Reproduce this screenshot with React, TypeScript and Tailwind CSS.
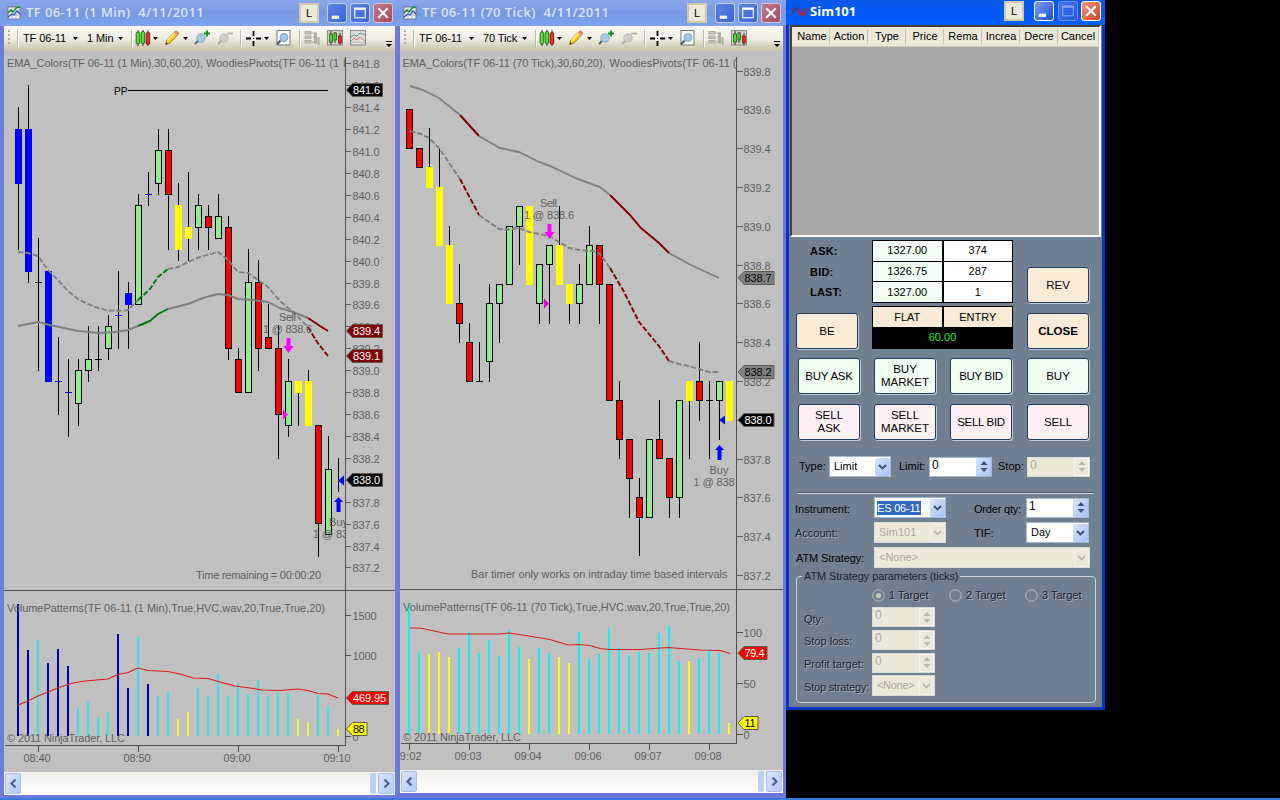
import React from "react";

type Kind = "b" | "g" | "r" | "y" | "k" | "db" | "dy";
/* [kind, body top, body bottom, wick top, wick bottom] */
type Candle = [Kind, number, number, number, number];
type Pt = [number, number];
type Seg = { c: string; p: Pt[]; dash?: boolean };
type Mark = { y: number; t: string; w: number; fill: string; color: string };
type Bar = [string, number];

const GRAY = "#808080";
const TXT = "#606060";
const FONT = '"Liberation Sans", Arial, sans-serif';

function T({ x, y, w, children, fill = TXT, size = 11 }: { x: number; y: number; w: number; children: string; fill?: string; size?: number }) {
  return (
    <text x={x} y={y} textLength={w} lengthAdjust="spacing" fontSize={size} fill={fill} fontFamily={FONT} xmlSpace="preserve">
      {children}
    </text>
  );
}

const FILLS: Record<string, string> = { b: "#0000ff", g: "#90ee90", r: "#ff0000", y: "#ffff00" };

function Candles({ x0, data }: { x0: number; data: Candle[] }) {
  return (
    <g shapeRendering="crispEdges">
      {data.map(([k, t, b, wt, wb], i) => {
        const x = x0 + i * 10;
        const doji = k === "k" || k === "db" || k === "dy";
        const line = k === "db" ? "#0000d0" : k === "dy" ? "#e8d800" : "#000";
        return (
          <g key={i}>
            {wb > wt && <rect x={x} y={wt} width={1} height={wb - wt} fill="#000" />}
            {doji && <rect x={x - 3} y={t} width={7} height={1} fill={line} />}
            {(k === "b" || k === "y") && <rect x={x - 3} y={t} width={7} height={b - t} fill={FILLS[k]} />}
            {(k === "g" || k === "r") && (
              <rect x={x - 2.5} y={t + 0.5} width={6} height={b - t - 1} fill={FILLS[k]} stroke="#000" strokeWidth={1} />
            )}
          </g>
        );
      })}
    </g>
  );
}

function Lines({ segs }: { segs: Seg[] }) {
  return (
    <g fill="none" strokeWidth={1.9}>
      {segs.map((s, i) => (
        <polyline key={i} stroke={s.c} strokeDasharray={s.dash ? "5.5 2" : undefined} points={s.p.map((q) => q.join(",")).join(" ")} />
      ))}
    </g>
  );
}

function Marker({ x, m }: { x: number; m: Mark }) {
  const r = x + m.w;
  return (
    <g>
      <path d={`M${x} ${m.y}L${x + 6} ${m.y - 6.5}H${r}V${m.y + 6.5}H${x + 6}Z`} fill={m.fill} stroke="#605c50" strokeWidth={1} />
      <T x={x + 6.5} y={m.y + 4} w={m.w - 9} fill={m.color}>{m.t}</T>
    </g>
  );
}

const DownArrow = ({ x, y }: { x: number; y: number }) => (
  <path d={`M${x - 2} ${y}h4v8h3l-5 7l-5 -7h3z`} fill="#ff00ff" />
);
const UpArrow = ({ x, y }: { x: number; y: number }) => (
  <path d={`M${x} ${y}l4.5 5h-2.5v10h-4v-10h-2.5z`} fill="#0000ff" />
);

const C1: Candle[] = [
  ["b", 129, 184, 107, 250], ["b", 129, 272, 85, 283], ["k", 282, 283, 238, 371], ["b", 271, 382, 0, 0],
  ["db", 381, 382, 337, 415], ["db", 392, 393, 359, 437], ["g", 370, 404, 359, 426], ["g", 359, 371, 326, 382],
  ["k", 359, 360, 326, 371], ["g", 326, 349, 315, 360], ["db", 315, 316, 271, 349], ["b", 293, 305, 282, 349],
  ["g", 205, 305, 194, 205], ["db", 194, 195, 172, 206], ["g", 150, 184, 129, 195], ["r", 150, 195, 129, 250],
  ["y", 205, 250, 183, 261], ["y", 227, 239, 172, 261], ["g", 205, 228, 194, 250], ["r", 216, 228, 205, 250],
  ["g", 216, 239, 194, 216], ["r", 227, 349, 216, 360], ["r", 359, 393, 348, 359], ["g", 282, 393, 249, 282],
  ["r", 282, 349, 260, 371], ["r", 337, 349, 304, 337], ["r", 348, 415, 326, 459], ["g", 381, 426, 359, 437],
  ["y", 381, 393, 393, 426], ["y", 381, 426, 370, 381], ["r", 425, 524, 524, 557], ["g", 469, 535, 436, 469],
  ["dy", 480, 481, 458, 492],
];

const C2: Candle[] = [
  ["r", 109, 149, 0, 0], ["r", 148, 168, 0, 0], ["y", 167, 188, 128, 167], ["y", 187, 246, 149, 187],
  ["y", 245, 304, 226, 245], ["r", 303, 324, 264, 343], ["r", 342, 382, 323, 342], ["k", 381, 382, 342, 382],
  ["g", 303, 362, 284, 382], ["g", 284, 304, 304, 343], ["g", 226, 285, 0, 0], ["g", 206, 227, 227, 265],
  ["y", 206, 285, 0, 0], ["g", 264, 304, 304, 324], ["g", 245, 265, 265, 324], ["y", 245, 285, 206, 245],
  ["y", 284, 304, 304, 324], ["g", 284, 304, 264, 324], ["g", 245, 285, 226, 245], ["r", 245, 285, 285, 324],
  ["r", 284, 401, 0, 0], ["r", 400, 440, 381, 459], ["r", 439, 479, 479, 518], ["r", 497, 518, 478, 556],
  ["g", 439, 518, 0, 0], ["r", 439, 459, 400, 439], ["r", 458, 498, 498, 518], ["g", 400, 498, 498, 518],
  ["y", 381, 401, 401, 459], ["r", 381, 401, 342, 421], ["k", 400, 401, 381, 459], ["g", 381, 401, 401, 440],
  ["y", 381, 421, 0, 0],
];

const S1: Seg[] = [
  { c: GRAY, dash: true, p: [[18, 252], [28, 253], [38, 256], [48, 270], [58, 280], [68, 291], [78, 299], [88, 304], [98, 308], [108, 310.5], [118, 311], [128, 310], [138, 300]] },
  { c: "#007800", dash: true, p: [[138, 300], [150, 289], [158, 277], [168, 269]] },
  { c: GRAY, dash: true, p: [[168, 269], [178, 267], [188, 262], [200, 257], [218, 252], [228, 260], [238, 272], [248, 273], [258, 280], [268, 287], [280, 301], [293, 312], [308, 327]] },
  { c: "#800000", dash: true, p: [[308, 327], [317, 342], [328, 356]] },
  { c: GRAY, p: [[18, 326], [38, 322], [50, 325], [78, 331], [100, 333], [115, 332], [128, 330], [138, 326]] },
  { c: "#007800", p: [[138, 326], [150, 321], [158, 314], [168, 309]] },
  { c: GRAY, p: [[168, 309], [188, 304], [203, 298], [218, 294], [228, 295], [238, 299], [253, 300], [268, 302], [280, 308], [293, 312], [308, 318]] },
  { c: "#800000", p: [[308, 318], [320, 326], [328, 331]] },
];

const S2: Seg[] = [
  { c: GRAY, p: [[410, 86], [420, 89], [429, 93], [439, 98], [460, 115]] },
  { c: "#800000", p: [[460, 115], [479, 136]] },
  { c: GRAY, p: [[479, 136], [500, 148], [519, 152], [539, 162], [550, 166], [569, 175], [578, 179], [600, 187], [610, 195]] },
  { c: "#800000", p: [[610, 195], [629, 214], [641, 228], [659, 243], [669, 253]] },
  { c: GRAY, p: [[669, 253], [691, 265], [719, 278]] },
  { c: GRAY, dash: true, p: [[410, 131], [421, 134], [429, 138], [439, 148], [460, 179]] },
  { c: "#800000", dash: true, p: [[460, 179], [479, 215]] },
  { c: GRAY, dash: true, p: [[479, 215], [499, 229], [509, 229.5], [519, 228], [529, 232], [549, 236], [569, 248], [579, 250], [593, 251], [600, 254], [610, 268]] },
  { c: "#800000", dash: true, p: [[610, 268], [623, 290], [639, 322], [659, 346], [669, 361]] },
  { c: GRAY, dash: true, p: [[669, 361], [679, 364], [689, 366], [699, 369], [709, 372], [719, 372]] },
];

const V1: Bar[] = [
  ["n", 604], ["n", 650], ["c", 640], ["n", 663], ["n", 649], ["n", 666], ["c", 708], ["c", 701], ["c", 717], ["c", 712], ["n", 634],
  ["n", 688], ["c", 637], ["n", 684], ["c", 696], ["c", 691], ["y", 719], ["y", 712], ["c", 687], ["c", 696], ["c", 674], ["c", 696],
  ["c", 683], ["c", 694], ["c", 680], ["c", 696], ["c", 693], ["c", 693], ["y", 719], ["y", 723], ["c", 695], ["c", 706], ["y", 729],
];
const V2: Bar[] = [
  ["c", 603], ["c", 652], ["y", 654], ["y", 652], ["y", 657], ["c", 648], ["c", 632], ["c", 653], ["c", 640], ["c", 656], ["c", 630],
  ["c", 647], ["y", 659], ["c", 648], ["c", 653], ["y", 657], ["y", 663], ["c", 632], ["c", 659], ["c", 654], ["c", 628], ["c", 648],
  ["c", 655], ["c", 652], ["c", 653], ["c", 633], ["c", 626], ["c", 661], ["y", 661], ["c", 658], ["c", 649], ["c", 653], ["y", 723],
];

function Bars({ x0, base, data, cols }: { x0: number; base: number; data: Bar[]; cols: Record<string, string> }) {
  return (
    <g shapeRendering="crispEdges">
      {data.map(([k, t], i) => (
        <rect key={i} x={x0 + i * 10} y={t} width={2} height={base - t} fill={cols[k]} />
      ))}
    </g>
  );
}

const P1 = Array.from({ length: 24 }, (_, i) => 841.8 - i * 0.2);
const P2 = Array.from({ length: 14 }, (_, i) => 839.8 - i * 0.2);

function ChartOne() {
  return (
    <svg className="block bg-[#c0c0c0]" width={391} height={721} viewBox="4 51 391 721">
      <defs>
        <clipPath id="plot-a"><rect x={4} y={51} width={341} height={694} /></clipPath>
      </defs>
      {P1.map((p) => {
        const y = Math.round(151 + (841 - p) * 109.6);
        return (
          <g key={p}>
            <rect x={346} y={y} width={5} height={1} fill={TXT} />
            <T x={352.5} y={y + 4.5} w={27}>{p.toFixed(1)}</T>
          </g>
        );
      })}
      <Candles x0={18} data={C1} />
      <Lines segs={S1} />
      <g clipPath="url(#plot-a)">
        <T x={7} y={67} w={196}>EMA_Colors(TF 06-11 (1 Min),30,60,20),</T>
        <T x={206} y={67} w={133}>WoodiesPivots(TF 06-11 (1</T>
        <T x={343} y={67} w={9}>M</T>
        <T x={329} y={526} w={19}>Buy</T>
        <T x={313} y={538} w={41}>1 @ 838</T>
      </g>
      <text x={114} y={94.5} fontSize={10} fill="#000" fontFamily={FONT}>PP</text>
      <rect x={128} y={90} width={200} height={1} fill="#000" />
      <T x={279} y={321} w={17}>Sell</T>
      <T x={263} y={333} w={49}>1 @ 838.6</T>
      <DownArrow x={288.5} y={338} />
      <path d="M283 409.500l5 5l-5 5z" fill="#ff00ff" />
      <path d="M344 475.500v10l-6 -5z" fill="#0000ff" />
      <UpArrow x={338.5} y={497} />
      <T x={196} y={579} w={125}>Time remaining = 00:00:20</T>
      <rect x={4} y={590} width={391} height={1} fill="#505050" />
      <Bars x0={17} base={736} data={V1} cols={{ n: "#0000b8", c: "#3ce4e4", y: "#f4f43c" }} />
      <polyline fill="none" stroke="#d81c1c" strokeWidth={1.1} points="18,705 28,701 38,696 48,692 60,687 73,683 85,681 108,679 118,674.5 128,672.500 138,668 148,670.5 168,671.500 180,674 193,678 208,678.5 220,682 235,686 250,688 262,690 280,690.5 298,689 310,691 318,693.5 328,694 338,698" />
      <T x={7} y={612} w={318}>VolumePatterns(TF 06-11 (1 Min),True,HVC.wav,20,True,True,20)</T>
      <T x={7} y={742} w={118}>© 2011 NinjaTrader, LLC</T>
      <g fill="#505050">
        <rect x={345} y={57} width={1} height={689} />
        <rect x={5} y={745} width={341} height={1} />
        {[38, 138, 238, 338].map((x) => <rect key={x} x={x} y={745} width={1} height={7} />)}
        {[615, 655, 736].map((y) => <rect key={y} x={346} y={y} width={5} height={1} />)}
      </g>
      <T x={352.5} y={620} w={24}>1500</T>
      <T x={352.5} y={660} w={24}>1000</T>
      <T x={352.5} y={741} w={6}>0</T>
      <T x={23.500} y={762} w={27}>08:40</T>
      <T x={123.500} y={762} w={27}>08:50</T>
      <T x={223.500} y={762} w={27}>09:00</T>
      <T x={323.500} y={762} w={27}>09:10</T>
      {([
        { y: 90, t: "841.6", w: 36, fill: "#000", color: "#fff" },
        { y: 331, t: "839.4", w: 36, fill: "#800000", color: "#fff" },
        { y: 356, t: "839.1", w: 36, fill: "#800000", color: "#fff" },
        { y: 480, t: "838.0", w: 36, fill: "#000", color: "#fff" },
        { y: 698, t: "469.95", w: 42, fill: "#f80000", color: "#fff" },
        { y: 729, t: "88", w: 20.5, fill: "#ffff00", color: "#000" },
      ] as Mark[]).map((m) => <Marker key={m.y} x={346.5} m={m} />)}
    </svg>
  );
}

function ChartTwo() {
  return (
    <svg className="block bg-[#c0c0c0]" width={383} height={719} viewBox="400 51 383 719">
      <defs>
        <clipPath id="plot-b"><rect x={400} y={51} width={336} height={719} /></clipPath>
      </defs>
      {P2.map((p) => {
        const y = Math.round(70.5 + (839.8 - p) * 194);
        return (
          <g key={p}>
            <rect x={737} y={y} width={6} height={1} fill={TXT} />
            <T x={743.5} y={y + 4.5} w={27}>{p.toFixed(1)}</T>
          </g>
        );
      })}
      <Candles x0={409} data={C2} />
      <Lines segs={S2} />
      <g clipPath="url(#plot-b)">
        <T x={402.5} y={67} w={203}>EMA_Colors(TF 06-11 (70 Tick),30,60,20),</T>
        <T x={609.5} y={67} w={127}>WoodiesPivots(TF 06-11 (</T>
        <T x={393.5} y={760} w={28}>09:02</T>
      </g>
      <T x={540} y={207} w={17}>Sell</T>
      <T x={524} y={219} w={50}>1 @ 838.6</T>
      <DownArrow x={549.5} y={224} />
      <path d="M544 298.500l5 5l-5 5z" fill="#e000e0" />
      <path d="M725 415.500v9l-6 -4.500z" fill="#0000ff" />
      <UpArrow x={719.5} y={445} />
      <T x={709.5} y={474} w={19}>Buy</T>
      <T x={693.5} y={486} w={41}>1 @ 838</T>
      <T x={471} y={578} w={256.500}>Bar timer only works on intraday time based intervals</T>
      <rect x={400} y={589} width={383} height={1} fill="#505050" />
      <Bars x0={408} base={734} data={V2} cols={{ c: "#14f0f4", y: "#ffff10" }} />
      <polyline fill="none" stroke="#d81c1c" strokeWidth={1.1} points="410,628 420,628 448,634 500,634 509,633 535,637 550,639.500 568,645 578,644.5 590,645.5 600,648.500 610,649.500 640,649.500 668,647.5 700,650 720,650.500 730,653.5" />
      <T x={403} y={611} w={327}>VolumePatterns(TF 06-11 (70 Tick),True,HVC.wav,20,True,True,20)</T>
      <T x={403} y={741} w={118}>© 2011 NinjaTrader, LLC</T>
      <g fill="#505050">
        <rect x={736} y={57} width={1} height={687} />
        <rect x={401} y={743} width={336} height={1} />
        {[409, 469, 529, 589, 649, 709].map((x) => <rect key={x} x={x} y={743} width={1} height={7} />)}
        {[632, 683, 734].map((y) => <rect key={y} x={737} y={y} width={6} height={1} />)}
      </g>
      <T x={743.5} y={637} w={18.5}>100</T>
      <T x={743.5} y={688} w={12}>50</T>
      <T x={743.5} y={739} w={6}>0</T>
      {["09:03", "09:04", "09:06", "09:07", "09:08"].map((t, i) => (
        <T key={t} x={454.5 + i * 60} y={760} w={27}>{t}</T>
      ))}
      {([
        { y: 278, t: "838.7", w: 36, fill: "#808080", color: "#000" },
        { y: 372, t: "838.2", w: 36, fill: "#808080", color: "#000" },
        { y: 420, t: "838.0", w: 36, fill: "#000", color: "#fff" },
        { y: 653, t: "79.4", w: 29, fill: "#f80000", color: "#fff" },
        { y: 723, t: "11", w: 20, fill: "#ffff00", color: "#000" },
      ] as Mark[]).map((m) => <Marker key={m.y} x={738} m={m} />)}
    </svg>
  );
}

/* ---------- window chrome ---------- */

function TitleButtons({ active = false }: { active?: boolean }) {
  const box = active
    ? "h-5 w-5 rounded-[3px] border border-white bg-linear-to-br from-[#7c9cf0] to-[#1f4cd0]"
    : "h-[20px] w-[20px] rounded-[3px] border border-[#c4d2f6] bg-linear-to-br from-[#5c84e4] to-[#3a62d4]";
  const close = active
    ? "h-5 w-5 rounded-[3px] border border-white bg-linear-to-br from-[#f09880] to-[#d03c14]"
    : "h-[20px] w-5 rounded-[3px] border border-[#d8c4dc] bg-linear-to-br from-[#c07c8c] to-[#a4485c]";
  return (
    <div className={active ? "flex gap-[3.500px]" : "flex gap-[3px]"}>
      <div className={box}>
        <svg viewBox="0 0 17 17" className="block size-full"><rect x={3.500} y={11} width={7} height={3} fill="#fff" /></svg>
      </div>
      <div className={active ? "h-5 w-5 rounded-[3px] border border-[#6c94f4] bg-linear-to-br from-[#4474ec] to-[#2458dc]" : box}>
        <svg viewBox="0 0 17 17" className="block size-full" fill="none" stroke={active ? "#7ca0f4" : "#fff"}>
          <rect x={3.500} y={4} width={10} height={9} />
          <path d="M3 4.500h11" strokeWidth={2} />
        </svg>
      </div>
      <div className={close}>
        <svg viewBox="0 0 17 17" className="block size-full"><path d="M4 4l9 9M13 4l-9 9" stroke="#fff" strokeWidth={2} /></svg>
      </div>
    </div>
  );
}

function LButton() {
  return (
    <div className="flex h-[20px] w-[20px] items-center justify-center border-2 border-[#d0c8ac] bg-[#ece9d8] text-[11px] leading-none text-black">L</div>
  );
}

const AppIcon = () => (
  <svg width={14} height={14} viewBox="0 0 14 14">
    <rect x={1} y={1} width={12} height={12} fill="#f0f0f0" stroke="#606878" strokeWidth={0.8} />
    <path d="M1 5h12M1 9h12M5 1v12M9 1v12" stroke="#a8b0c0" strokeWidth={0.700} />
    <path d="M1 7l3-3 2 2 3-4 4-1" stroke="#209030" strokeWidth={1.6} fill="none" />
    <path d="M1 11l4-3 2 1 3-4 3 3" stroke="#2050a8" strokeWidth={1.200} fill="none" />
  </svg>
);

const Caret = ({ className = "" }: { className?: string }) => (
  <svg className={"shrink-0 " + className} width={5} height={3} viewBox="0 0 5 3"><path d="M0 0h5L2.500 3z" fill="#000" /></svg>
);
const Sep = ({ className = "" }: { className?: string }) => <div className={"h-[17px] w-[2px] shrink-0 border-l border-r border-l-[#bdb9a8] border-r-white " + className} />;

const Bars3 = () => (
  <svg className="shrink-0" width={16} height={18} viewBox="0 0 16 18">
    <path d="M3 1v16M8 1v16M13 1v16" stroke="#333" />
    <rect x={1.200} y={3} width={3.500} height={12} rx={1.500} fill="#58e030" stroke="#186010" strokeWidth={0.900} />
    <rect x={6.200} y={2.500} width={3.500} height={12} rx={1.500} fill="#58e030" stroke="#186010" strokeWidth={0.900} />
    <rect x={11.200} y={3.500} width={3.500} height={12} rx={1.500} fill="#e83028" stroke="#801010" strokeWidth={0.900} />
  </svg>
);
const Pencil = () => (
  <svg className="shrink-0" width={16} height={16} viewBox="0 0 16 16">
    <path d="M1.500 14.500l1.500-4.500 8-8.500q2-1 3 .5t0 2.500l-8 8.500z" fill="#f8c828" stroke="#a86810" strokeWidth={0.900} />
    <path d="M3 10l8-8.500 1.300 1.200-8 8.600z" fill="#fff070" />
    <path d="M11 1.500q2-1 3 .5t0 2.500l-1.200 1-3-3z" fill="#e88878" />
    <path d="M1.500 14.500l.8-2.300 1.500 1.500z" fill="#382010" />
  </svg>
);
const Mag = ({ mode }: { mode: "in" | "out" }) => {
  const on = mode === "in";
  return (
    <svg className="shrink-0" width={17} height={16} viewBox="0 0 17 16">
      <path d="M4.500 10.500L1 14" stroke={on ? "#606870" : "#b0aca0"} strokeWidth={2.200} />
      <circle cx={7} cy={8} r={4.200} fill={on ? "#a0cce8" : "#ccccc8"} stroke={on ? "#88a8c4" : "#bcbcb8"} />
      {on ? <path d="M13 0.500v6M10 3.500h6" stroke="#10981c" strokeWidth={2} /> : <path d="M10 3.500h6" stroke="#b8b4ac" strokeWidth={2} />}
    </svg>
  );
};
const Cross = () => (
  <svg className="shrink-0" width={15} height={15} viewBox="0 0 15 15"><path d="M7.500 0v5M7.500 10v5M0 7.500h5M10 7.500h5" stroke="#000" strokeWidth={1.800} /><rect x={7} y={7} width={1} height={1} /></svg>
);
const DocMag = () => (
  <svg className="shrink-0" width={15} height={16} viewBox="0 0 15 16">
    <rect x={1} y={0.500} width={13} height={14.500} fill="#fff" stroke="#707880" />
    <path d="M4.500 10.500L1 14.500" stroke="#505860" strokeWidth={2} />
    <circle cx={8} cy={7.500} r={4} fill="#a0c8ec" stroke="#84a4c4" />
  </svg>
);
const Tree = () => (
  <svg className="shrink-0" width={16} height={16} viewBox="0 0 16 16" fill="none" stroke="#b0ac9e">
    <rect x={1} y={1.500} width={6} height={2.500} fill="#c4c0b4" /><rect x={1} y={6} width={6} height={2.500} fill="#c4c0b4" /><rect x={1} y={10.500} width={6} height={2.500} fill="#c4c0b4" />
    <path d="M7 3h4M9 7h3M8 12h4" /><rect x={10.500} y={3} width={2} height={10} fill="#b4b0a4" /><path d="M14.500 7v8" strokeWidth={2} />
  </svg>
);
const Framed = () => (
  <svg className="shrink-0" width={16} height={16} viewBox="0 0 16 16">
    <rect x={0.500} y={0.500} width={15} height={14.500} fill="#d4d0c8" stroke="#888" />
    <path d="M4 1v14M8 2v11M13 3v12" stroke="#333" />
    <rect x={2.500} y={4} width={3} height={8} fill="#50d838" stroke="#186010" strokeWidth={0.800} /><rect x={7} y={3} width={2.500} height={7} fill="#50d838" stroke="#186010" strokeWidth={0.800} />
    <rect x={11.500} y={6} width={2.800} height={7} fill="#e83028" stroke="#801010" strokeWidth={0.800} />
  </svg>
);
const MiniChart = () => (
  <svg className="shrink-0" width={16} height={16} viewBox="0 0 16 16" fill="none">
    <rect x={0.500} y={0.500} width={15} height={14.500} fill="#dcdcd8" stroke="#888" />
    <path d="M1 7l3-2 3 1 3-3 5 2" stroke="#58a070" /><path d="M1 11l3-3 3 2 3-3 5 4" stroke="#e07070" /><path d="M1 12.500h14" stroke="#c0c0c0" />
  </svg>
);

function ToolBar({ period, wide }: { period: string; wide?: boolean }) {
  return (
    <div className="flex h-[25px] shrink-0 items-center bg-linear-to-b from-[#fbfaf6] via-[#efede2] to-[#c6c2ac] pb-px text-[11px] tracking-[-0.1px] text-black">
      <svg className="ml-[4px]" width={3} height={16} viewBox="0 0 3 16"><path d="M1 0v16" stroke="#b4b09c" strokeWidth={2} strokeDasharray="2 2" /></svg>
      <Sep className="ml-[6px]" />
      <span className="ml-[4px] w-[46px] whitespace-nowrap">TF 06-11</span>
      <Caret className="ml-[4px]" />
      <span className={wide ? "ml-[9px] w-[34px] whitespace-nowrap" : "ml-[9px] w-[27px] whitespace-nowrap"}>{period}</span>
      <Caret className={wide ? "ml-[5px]" : "ml-[4px]"} />
      <Sep className="ml-[8px]" />
      <div className="ml-[2px] flex items-center"><Bars3 /><Caret className="ml-[2px]" /></div>
      <div className="ml-[6px] flex items-center"><Pencil /><Caret className="ml-[3px]" /></div>
      <div className="ml-[6px] flex items-center gap-[6px]"><Mag mode="in" /><Mag mode="out" /></div>
      <Sep className="ml-[6px]" />
      <div className="ml-[4px] flex items-center"><Cross /><Caret className="ml-[3px]" /></div>
      <div className="ml-[7px]"><DocMag /></div>
      <Sep className="ml-[8px]" />
      <div className="ml-[3px] flex items-center gap-[7px]"><Tree /><Framed />{!wide && <MiniChart />}</div>
      <div className="flex-1" />
      <svg className="mr-[3px] mt-[12px] shrink-0" width={6} height={7} viewBox="0 0 6 7"><path d="M0 .500h6" stroke="#000" /><path d="M0 3h6L3 6z" fill="#000" /></svg>
    </div>
  );
}

function ScrollBar() {
  const b = "flex h-[21px] w-4 shrink-0 items-center justify-center rounded-[2px] border border-[#a8bcf0] bg-linear-to-br from-[#d8e4ff] to-[#b4caf8]";
  return (
    <div className="flex h-[23px] shrink-0 items-center bg-linear-to-b from-[#f0efea] to-[#fffffc] px-px">
      <div className={b}><svg width={7} height={9} viewBox="0 0 7 9"><path d="M5.500 .500l-4 4 4 4" stroke="#405890" strokeWidth={2} fill="none" /></svg></div>
      <div className="flex-1" />
      <div className="mr-[2px] h-[21px] w-[6px] rounded-[2px] bg-[#bccff8]" />
      <div className={b}><svg width={7} height={9} viewBox="0 0 7 9"><path d="M1.500 .500l4 4-4 4" stroke="#405890" strokeWidth={2} fill="none" /></svg></div>
    </div>
  );
}

function ChartWindow({ title, period, second }: { title: string; period: string; second?: boolean }) {
  return (
    <section className={second
      ? "flex h-[798px] w-[388px] shrink-0 flex-col border-r-[3px] border-b-[5px] border-l-2 border-[#6c78d8] bg-[#6c78d8]"
      : "flex h-[798px] w-[398px] shrink-0 flex-col border-r-[3px] border-b-[3px] border-l-4 border-[#6c7cdc] bg-[#6c7cdc]"}>
      <header className={second
        ? "-mr-[3px] -ml-[2px] flex h-[26px] shrink-0 items-center bg-linear-to-b from-[#8ca8ec] via-[#7898e4] to-[#7ea4ee] pr-[5px] pl-[5px]"
        : "-mr-[3px] -ml-[4px] flex h-[26px] shrink-0 items-center bg-linear-to-b from-[#8ca8ec] via-[#7898e4] to-[#7ea4ee] pr-[5px] pl-[7px]"}>
        <AppIcon />
        <span className="ml-[5px] flex-1 font-['Open_Sans','Noto_Sans',sans-serif] text-[13px] font-semibold tracking-[0.420px] whitespace-pre text-[#dce6fa]">{title}</span>
        <LButton />
        <div className="w-[8px]" />
        <TitleButtons />
      </header>
      <ToolBar period={period} wide={second} />
      {second ? <ChartTwo /> : <ChartOne />}
      <ScrollBar />
    </section>
  );
}

/* ---------- order entry ---------- */

const raised = "flex w-[62px] items-center justify-center rounded-[3px] border border-[#1c3c60] text-center text-[11.500px] leading-[13px] text-black shadow-[1px_1px_0_#c0ccd8]";

function Btn({ children, tone, className = "" }: { children: React.ReactNode; tone: "beige" | "mint" | "pink"; className?: string }) {
  const bg = tone === "beige" ? "bg-[#faebd7]" : tone === "mint" ? "bg-[#f0fff0]" : "bg-[#fff0f5]";
  return <button className={`${raised} ${bg} h-[36px] ${className}`}>{children}</button>;
}

function Combo({ text, off, sel, className }: { text: string; off?: boolean; sel?: boolean; className: string }) {
  return (
    <div className={`flex h-[21px] shrink-0 items-center border text-[11px] ${off ? "border-[#d8dcd8] bg-[#ece9d8] text-[#aca899]" : "border-[#a4b8d4] bg-white text-black"} ${className}`}>
      <span className={sel ? "ml-[2px] w-[44px] bg-[#316ac5] leading-[14px] tracking-[-0.200px] whitespace-nowrap text-white" : "ml-[4px] whitespace-nowrap"}>{text}</span>
      <div className="flex-1" />
      <div className={`flex h-[18px] w-[15px] items-center justify-center rounded-[2px] ${off ? "border border-[#f4f2e8] bg-[#ece9d8]" : "bg-linear-to-br from-[#d8e4ff] to-[#a8c0f4]"}`}>
        <svg width={9} height={6} viewBox="0 0 9 6"><path d="M1 1l3.500 3.500L8 1" stroke={off ? "#bcb8a8" : "#38507c"} strokeWidth={1.900} fill="none" /></svg>
      </div>
    </div>
  );
}

function Spin({ text, off, className = "w-[63px]" }: { text: string; off?: boolean; className?: string }) {
  return (
    <div className={`flex h-[20px] shrink-0 border text-[11px] ${off ? "border-[#d8dcd8] bg-[#ece9d8] text-[#aca899]" : "border-[#a4b8d4] bg-white text-black"} ${className}`}>
      <span className="ml-[2px] text-[12px] leading-[15px]">{text}</span>
      <div className="flex-1" />
      <div className={`flex w-[15px] items-center justify-center ${off ? "border border-[#f8f6ee] bg-[#ece9d8]" : "bg-linear-to-br from-[#d8e4ff] to-[#a8c0f4]"}`}>
        <svg width={8} height={13} viewBox="0 0 8 13" fill={off ? "#bcb8a8" : "#38507c"}><path d="M0.500 5L4 1l3.500 4zM0.500 8L4 12l3.500-4z" /></svg>
      </div>
    </div>
  );
}

const ghost = "text-[#1c2430] [text-shadow:1px_1px_0_#a4b0bc]";

function Radio({ label, on, className }: { label: string; on?: boolean; className: string }) {
  return (
    <div className={`flex items-center ${className}`}>
      <svg width={13} height={13} viewBox="0 0 13 13" fill="none"><circle cx={6.500} cy={6.500} r={5.700} stroke="#b8bcb8" />{on && <circle cx={6.500} cy={6.500} r={2.600} fill="#c8c8bc" />}</svg>
      <span className={`ml-[4px] whitespace-nowrap ${ghost}`}>{label}</span>
    </div>
  );
}

const cell = "flex items-center justify-center border-black text-[11px] leading-none";

function SimWindow() {
  return (
    <section className="flex h-[710px] w-[319px] shrink-0 flex-col border-x-[3px] border-b-[3px] border-[#0634c4] bg-[#708090]">
      <header className="-mx-[3px] flex h-[25px] shrink-0 items-start bg-linear-to-b from-[#0858e8] via-[#0458f4] to-[#0060ff] pt-px pr-[4px] pl-[6px]">
        <svg className="mt-[4px]" width={15} height={13} viewBox="0 0 15 13" fill="none" strokeWidth={3}>
          <path d="M1 8q1-6 4-4 2 1 3 4" stroke="#3a3c90" /><path d="M7 5q2 7 5 4 2-2 2-6" stroke="#983050" />
        </svg>
        <span className="ml-[3px] flex-1 pt-[2px] font-['Open_Sans','Noto_Sans',sans-serif] text-[13px] leading-[17px] font-bold text-white">Sim101</span>
        <LButton />
        <div className="w-[10px]" />
        <TitleButtons active />
      </header>
      <div className="mx-px flex h-[212px] flex-col border-2 border-t-[#404040] border-r-white border-b-white border-l-[#404040] bg-[#a9a9a9]">
        <div className="flex h-[20px] shrink-0 items-center border-b border-[#c8c4b0] bg-[#ece9d8] text-[11px] text-black">
          {["Name", "Action", "Type", "Price", "Rema", "Increa", "Decre", "Cancel"].map((h, i) => (
            <div key={h} className={`flex h-[15px] items-center justify-center border-r border-[#c8c4b0] whitespace-nowrap ${i === 0 ? "w-[38px] pl-[3px]" : i === 7 ? "w-[41px]" : "w-[38px] pl-px"}`}>{h}</div>
          ))}
        </div>
      </div>

      <div className="mt-[3px] flex h-[110px] shrink-0 pl-[7px] text-black">
        <div className="flex w-[76px] flex-col">
          <div className="flex h-[73px] flex-col pl-[14px] text-[11px] font-bold tracking-[0.200px]">
            <span className="h-[21px] leading-[23px]">ASK:</span><span className="h-[20px] leading-[22px]">BID:</span><span className="h-[21px] leading-[22px]">LAST:</span>
          </div>
          <Btn tone="beige">BE</Btn>
        </div>
        <div className="flex w-[141px] flex-col">
          <div className="grid h-[63px] grid-cols-2 grid-rows-3 gap-px gap-x-[2px] border border-black bg-black">
            {["1327.00", "374", "1326.75", "287", "1327.00", "1"].map((v, i) => (
              <div key={i} className={`${cell} ${i % 2 ? "bg-white" : "bg-[#f0fff0]"}`}>{v}</div>
            ))}
          </div>
          <div className="mt-[3px] flex h-[43px] flex-col border border-black bg-black">
            <div className="grid h-[20px] grid-cols-2 gap-[2px]">
              <div className={`${cell} bg-[#faebd7]`}>FLAT</div><div className={`${cell} bg-[#faebd7]`}>ENTRY</div>
            </div>
            <div className="flex flex-1 items-center justify-center text-[11px] leading-none text-[#20e820]">60.00</div>
          </div>
        </div>
        <div className="ml-[14px] flex flex-col gap-[10px] pt-[27px]">
          <Btn tone="beige">REV</Btn>
          <Btn tone="beige" className="font-bold">CLOSE</Btn>
        </div>
      </div>

      <div className="mt-[8px] flex shrink-0 flex-col gap-[10px] pl-[9px]">
        <div className="flex">
          <Btn tone="mint"><span className="whitespace-nowrap tracking-[-0.200px]">BUY ASK</span></Btn>
          <Btn tone="mint" className="ml-[14px]">BUY<br />MARKET</Btn>
          <Btn tone="mint" className="ml-[14px]"><span className="whitespace-nowrap tracking-[-0.300px]">BUY BID</span></Btn>
          <Btn tone="mint" className="ml-[15px]">BUY</Btn>
        </div>
        <div className="flex">
          <Btn tone="pink">SELL<br />ASK</Btn>
          <Btn tone="pink" className="ml-[14px]">SELL<br />MARKET</Btn>
          <Btn tone="pink" className="ml-[14px]"><span className="whitespace-nowrap tracking-[-0.300px]">SELL BID</span></Btn>
          <Btn tone="pink" className="ml-[15px]">SELL</Btn>
        </div>
      </div>

      <div className="mt-[16px] flex h-[21px] shrink-0 items-center pl-[10px] text-[11px] text-black">
        <span className="w-[30px]">Type:</span><Combo text="Limit" className="w-[62px]" />
        <span className="ml-[8px] w-[30px]">Limit:</span><Spin text="0" />
        <span className="ml-[6px] w-[29px]">Stop:</span><Spin text="0" off />
      </div>
      <div className="mx-[8px] mt-[15px] h-[2px] shrink-0 border-b border-[#d0d6dc] bg-[#48586c]" />

      <div className="mt-[3px] flex h-[21px] shrink-0 items-center pl-[6px] text-[11px] text-black">
        <span className="w-[79px] pt-[3px]">Instrument:</span><Combo text="ES 06-11" sel className="w-[72px]" />
        <span className="ml-[28px] w-[52px] pt-[3px] whitespace-nowrap tracking-[-0.200px]">Order qty:</span><Spin text="1" />
      </div>
      <div className="mt-[4px] flex h-[21px] shrink-0 items-center pl-[6px] text-[11px] text-black">
        <span className={`w-[79px] pt-[2px] ${ghost}`}>Account:</span><Combo text="Sim101" off className="w-[72px]" />
        <span className="ml-[28px] w-[52px] pt-[2px]">TIF:</span><Combo text="Day" className="w-[63px]" />
      </div>
      <div className="mt-[4px] flex h-[21px] shrink-0 items-center pl-[7px] text-[11px] text-black">
        <span className="w-[78px] pt-px whitespace-nowrap tracking-[-0.100px]">ATM Strategy:</span><Combo text="<None>" off className="w-[216px]" />
      </div>

      <fieldset className="mr-[6px] ml-[7px] mt-px flex h-[134px] shrink-0 flex-col rounded-[4px] border border-[#d0d4d8] text-[11px]">
        <legend className="ml-[5px] px-[2px] leading-[15px] tracking-[-0.100px] text-[#1c2430]">ATM Strategy parameters (ticks)</legend>
        <div className="flex h-[22px] items-center pl-[75px] pt-px">
          <Radio label="1 Target" on className="w-[77px]" /><Radio label="2 Target" className="w-[76px]" /><Radio label="3 Target" className="" />
        </div>
        <div className="mt-px flex flex-col gap-[3px] pl-[7px]">
          <div className="flex h-[20px] items-center"><span className={`w-[68px] pt-[4px] ${ghost}`}>Qty:</span><Spin text="0" off /></div>
          <div className="flex h-[20px] items-center"><span className={`w-[68px] pt-[3px] ${ghost}`}>Stop loss:</span><Spin text="0" off /></div>
          <div className="flex h-[19px] items-center"><span className={`w-[68px] pt-[4px] ${ghost}`}>Profit target:</span><Spin text="0" off /></div>
          <div className="flex h-[21px] items-center"><span className={`w-[68px] pt-[3px] whitespace-nowrap tracking-[-0.200px] ${ghost}`}>Stop strategy:</span><Combo text="<None>" off className="w-[63px] tracking-[-0.300px]" /></div>
        </div>
      </fieldset>
    </section>
  );
}

export default function App() {
  return (
    <div className="flex h-[800px] w-[1280px] flex-col overflow-hidden bg-black font-['Liberation_Sans',Arial,sans-serif]">
      <main className="flex h-[798px] items-start">
        <ChartWindow title="TF 06-11 (1 Min)  4/11/2011" period="1 Min" />
        <ChartWindow title="TF 06-11 (70 Tick)  4/11/2011" period="70 Tick" second />
        <SimWindow />
      </main>
      <div className="h-[2px] bg-[#3a78dc]" />
    </div>
  );
}
